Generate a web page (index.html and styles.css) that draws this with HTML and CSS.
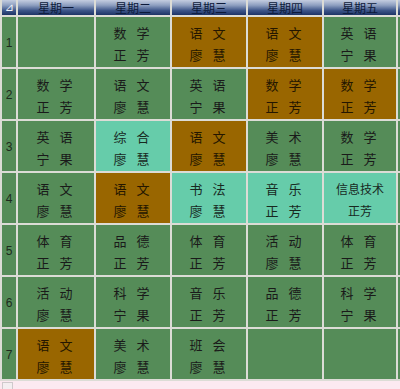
FILE: index.html
```
<!DOCTYPE html>
<html lang="zh">
<head>
<meta charset="utf-8">
<title>课程表</title>
<link rel="stylesheet" href="styles.css">
</head>
<body>
<div class="sheet">
  <div class="hd corner">⊿</div>
  <div class="hd">星期一</div>
  <div class="hd">星期二</div>
  <div class="hd">星期三</div>
  <div class="hd">星期四</div>
  <div class="hd">星期五</div>
  <div class="hd"></div>

  <div class="rn">1</div>
  <div class="c g"></div>
  <div class="c g"><span>数学</span><span>正芳</span></div>
  <div class="c b"><span>语文</span><span>廖慧</span></div>
  <div class="c b"><span>语文</span><span>廖慧</span></div>
  <div class="c g"><span>英语</span><span>宁果</span></div>
  <div class="c g"></div>

  <div class="rn">2</div>
  <div class="c g"><span>数学</span><span>正芳</span></div>
  <div class="c g"><span>语文</span><span>廖慧</span></div>
  <div class="c g"><span>英语</span><span>宁果</span></div>
  <div class="c b"><span>数学</span><span>正芳</span></div>
  <div class="c b"><span>数学</span><span>正芳</span></div>
  <div class="c g"></div>

  <div class="rn">3</div>
  <div class="c g"><span>英语</span><span>宁果</span></div>
  <div class="c t"><span>综合</span><span>廖慧</span></div>
  <div class="c b"><span>语文</span><span>廖慧</span></div>
  <div class="c g"><span>美术</span><span>廖慧</span></div>
  <div class="c g"><span>数学</span><span>正芳</span></div>
  <div class="c g"></div>

  <div class="rn">4</div>
  <div class="c g"><span>语文</span><span>廖慧</span></div>
  <div class="c b"><span>语文</span><span>廖慧</span></div>
  <div class="c t"><span>书法</span><span>廖慧</span></div>
  <div class="c t"><span>音乐</span><span>正芳</span></div>
  <div class="c t small"><span>信息技术</span><span>正芳</span></div>
  <div class="c g"></div>

  <div class="rn">5</div>
  <div class="c g"><span>体育</span><span>正芳</span></div>
  <div class="c g"><span>品德</span><span>正芳</span></div>
  <div class="c g"><span>体育</span><span>正芳</span></div>
  <div class="c g"><span>活动</span><span>廖慧</span></div>
  <div class="c g"><span>体育</span><span>正芳</span></div>
  <div class="c g"></div>

  <div class="rn">6</div>
  <div class="c g"><span>活动</span><span>廖慧</span></div>
  <div class="c g"><span>科学</span><span>宁果</span></div>
  <div class="c g"><span>音乐</span><span>正芳</span></div>
  <div class="c g"><span>品德</span><span>正芳</span></div>
  <div class="c g"><span>科学</span><span>宁果</span></div>
  <div class="c g"></div>

  <div class="rn">7</div>
  <div class="c b"><span>语文</span><span>廖慧</span></div>
  <div class="c g"><span>美术</span><span>廖慧</span></div>
  <div class="c g"><span>班会</span><span>廖慧</span></div>
  <div class="c g"></div>
  <div class="c g"></div>
  <div class="c g"></div>

  <div class="foot"><i class="box"></i></div>
</div>
</body>
</html>
```

FILE: styles.css
```
html, body {
  margin: 0;
  padding: 0;
  width: 400px;
  height: 389px;
  overflow: hidden;
  background: #fce9f1;
}

.sheet {
  display: grid;
  grid-template-columns: 14px 76px 74px 74px 74px 72px 2px;
  grid-template-rows: 15px repeat(7, 50px) 8px;
  gap: 2px;
  padding-left: 2px;
  width: 400px;
  box-sizing: border-box;
  background: #dcdcd6;
  font-family: "Noto Sans CJK SC", "Noto Sans", sans-serif;
}

.hd {
  background: linear-gradient(to bottom, #c4cde0 0%, #8e9fc0 35%, #3d5589 70%, #1d3366 100%);
  color: #0d1a3a;
  font-size: 12px;
  line-height: 15px;
  text-align: center;
  overflow: hidden;
  white-space: nowrap;
}

.corner {
  color: #eef2fa;
  font-size: 11px;
  font-family: "DejaVu Sans", sans-serif;
}

.rn {
  background: #558c58;
  color: #1c2a1c;
  font-family: "Liberation Sans", Arial, sans-serif;
  font-size: 12px;
  display: flex;
  align-items: center;
  justify-content: center;
  padding-top: 2px;
}

.c {
  display: flex;
  flex-direction: column;
  align-items: center;
  justify-content: center;
  padding-top: 3px;
  font-size: 13px;
  line-height: 22px;
  color: #1a1a1a;
  overflow: hidden;
}

.c span {
  display: block;
  letter-spacing: 10px;
  text-indent: 7px;
  white-space: nowrap;
}

.c.small span {
  letter-spacing: 0;
  text-indent: 0;
  font-size: 12px;
}

.g { background: #558c58; }
.b { background: #996600; color: #241600; }
.t { background: #66ccaa; color: #18291f; }

.foot {
  grid-column: 1 / -1;
  background: #fce9f1;
  margin-left: -2px;
  padding: 1px 0 0 2px;
  overflow: hidden;
}

.box {
  display: block;
  width: 9px;
  height: 9px;
  border: 1px solid #cfc9cc;
  background: #f4eef1;
}
```
